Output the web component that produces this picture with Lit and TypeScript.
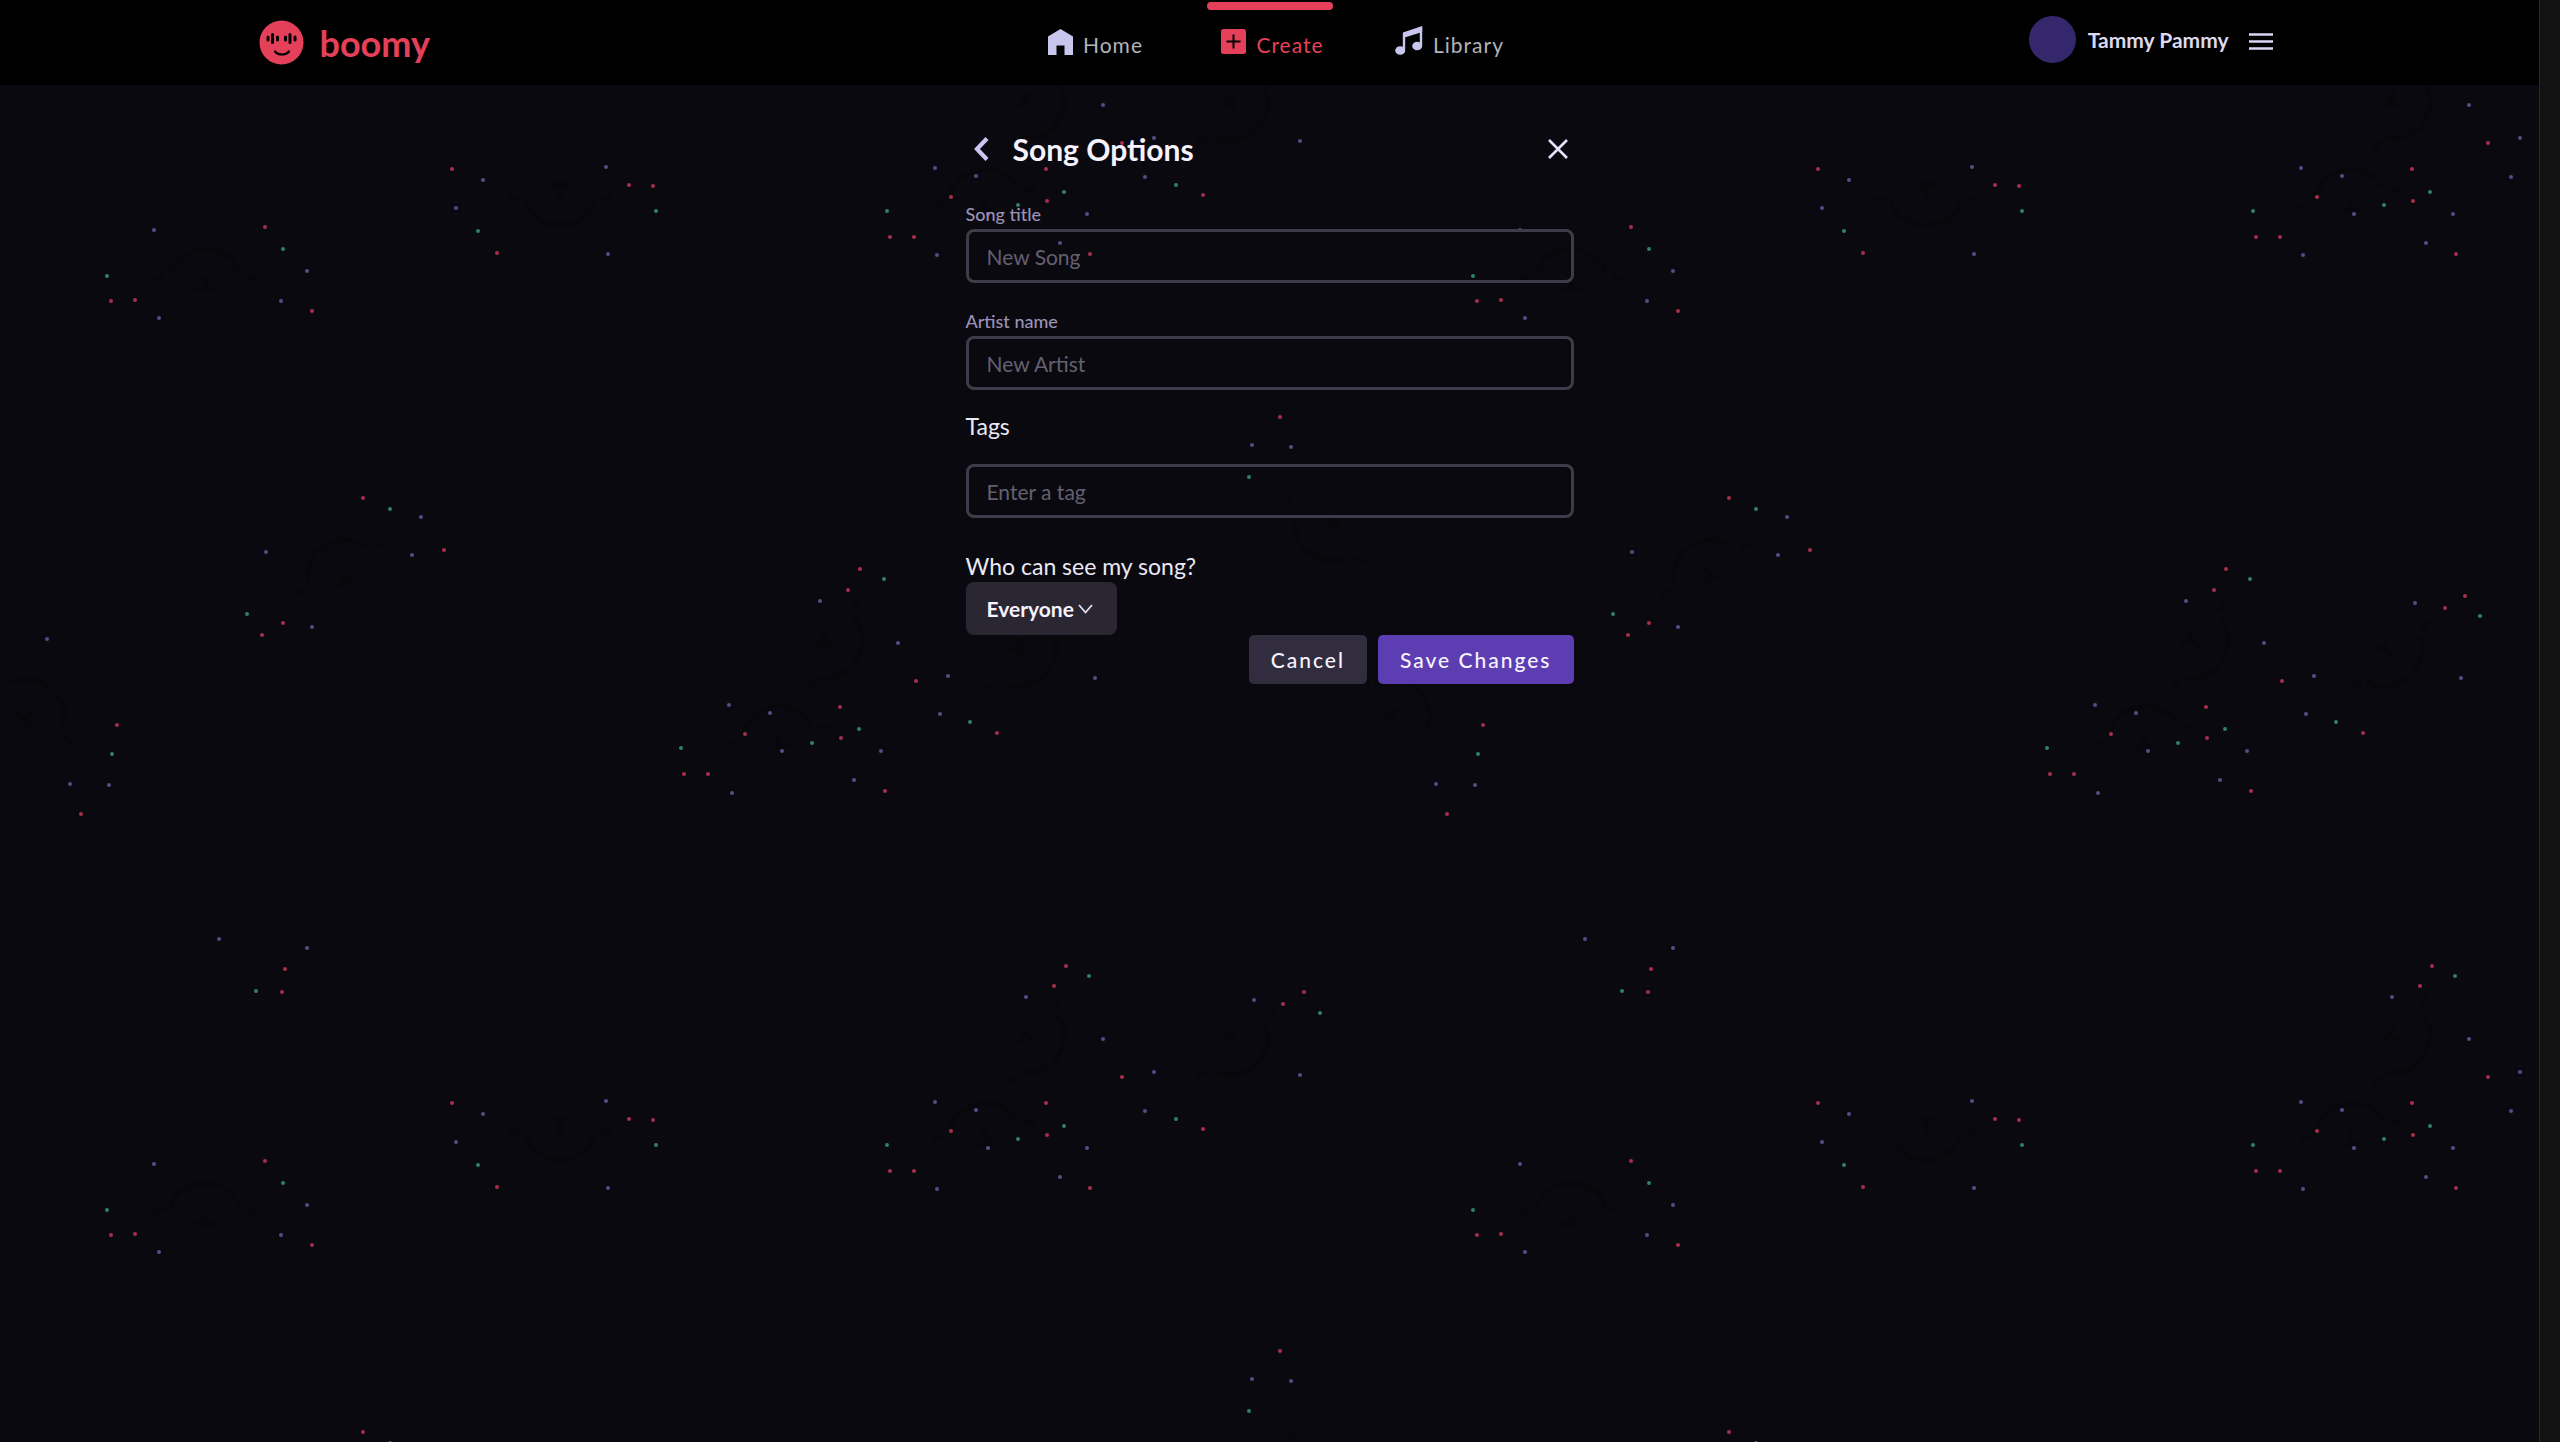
import { LitElement, html, svg, css } from "lit";
import { customElement, state } from "lit/decorators.js";

const TILE_W = 1366;
const TILE_H = 934;

/** Confetti of the background tile, grouped by colour as x,y pairs. */
const CONFETTI: Record<string, number[][]> = {
  rose: [
    [452, 169], [629, 185], [653, 186], [497, 253], [265, 227], [111, 301], [135, 300], [312, 311],
    [363, 498], [444, 550], [283, 623], [262, 635], [117, 725], [81, 814], [285, 969], [282, 992],
    [684, 774], [860, 569], [848, 590], [916, 681], [840, 707], [997, 733], [745, 734], [841, 738],
    [708, 774], [885, 791], [1066, 966], [1054, 986], [1304, 992], [1283, 1004], [1122, 1077],
    [1046, 1103], [1203, 1129], [951, 1131], [1047, 1135], [890, 1171], [914, 1171], [1090, 1188],
    [1280, 417], [1079, 608], [1099, 596],
  ],
  violet: [
    [483, 180], [606, 167], [456, 208], [608, 254], [154, 230], [307, 271], [159, 318], [281, 301],
    [421, 517], [266, 552], [412, 555], [312, 627], [47, 639], [70, 784], [109, 785], [219, 939],
    [307, 948], [820, 601], [898, 643], [948, 676], [1095, 678], [729, 705], [770, 713], [940, 714],
    [782, 751], [881, 751], [854, 780], [732, 793], [1026, 997], [1254, 1000], [1103, 1039],
    [1154, 1072], [1300, 1075], [935, 1102], [976, 1110], [1145, 1111], [988, 1148], [1087, 1148],
    [1060, 1177], [937, 1189], [1252, 445], [1291, 447], [1049, 603],
  ],
  teal: [
    [656, 211], [478, 231], [283, 249], [107, 276], [390, 509], [247, 614], [112, 754], [256, 991],
    [681, 748], [884, 579], [970, 722], [859, 729], [812, 743], [1089, 976], [1320, 1013],
    [1176, 1119], [1064, 1126], [1018, 1139], [887, 1145], [1249, 477], [1114, 616],
  ],
};

/** Ghost faces of the tile: x, y, rotation in degrees. */
const FACES = [
  [205, 278, 180], [560, 197, 0], [340, 570, 150], [32, 710, 220], [832, 645, -60],
  [778, 735, 170], [1034, 106, -60], [1236, 110, -40], [1326, 530, 40], [1024, 655, -40],
  [984, 198, 170],
];

@customElement("confetti-backdrop")
export class ConfettiBackdrop extends LitElement {
  static styles = css`
    :host {
      display: block;
      pointer-events: none;
    }
    .canvas {
      display: block;
      width: 100%;
      height: 100%;
    }
    .rose {
      fill: #a62f4b;
    }
    .violet {
      fill: #564d87;
    }
    .teal {
      fill: #2f8070;
    }
    .face {
      fill: none;
      stroke: #07070c;
      stroke-width: 6;
      stroke-linecap: round;
    }
  `;

  render() {
    return html`
      <svg class="canvas" aria-hidden="true">
        <defs>
          <pattern id="tile" width=${TILE_W} height=${TILE_H} patternUnits="userSpaceOnUse">
            ${FACES.map(
              ([x, y, turn]) => svg`
                <g class="face" transform="translate(${x} ${y}) rotate(${turn})">
                  <path d="M-34 6C-24 36 24 36 34 6M-50 0L-42 2M50 0L42 2M-8 -12L8 -12M0 -12L0 0" />
                </g>`,
            )}
            ${Object.entries(CONFETTI).map(([tone, dots]) =>
              dots.map(([x, y]) => svg`<circle class=${tone} cx=${x} cy=${y % TILE_H} r="2" />`),
            )}
          </pattern>
        </defs>
        <rect width="100%" height="100%" fill="url(#tile)" />
      </svg>
    `;
  }
}

@customElement("site-header")
export class SiteHeader extends LitElement {
  static styles = css`
    :host {
      display: block;
      background: #000;
    }
    .bar {
      box-sizing: border-box;
      display: grid;
      grid-template-columns: 1fr auto 1fr;
      max-width: 2022px;
      height: 85px;
      margin: 0 auto;
    }
    a {
      color: inherit;
      text-decoration: none;
    }
    .brand {
      display: flex;
      align-items: center;
      justify-self: start;
      gap: 16px;
      color: #e4405a;
      font-size: 36px;
      font-weight: 700;
      line-height: 44px;
    }
    .nav {
      display: flex;
      gap: 51px;
    }
    .item {
      box-sizing: border-box;
      display: flex;
      flex-direction: column;
      width: 126px;
      padding-top: 2px;
      color: #b4b3b8;
      font-size: 21px;
      line-height: 24px;
      letter-spacing: 1px;
    }
    .marker {
      height: 8px;
      border-radius: 4px;
    }
    .active {
      color: #e4405a;
    }
    .active .marker {
      background: #e4405a;
    }
    .entry {
      display: flex;
      align-items: flex-end;
      justify-content: center;
      gap: 10px;
      height: 47px;
      padding-left: 6px;
    }
    .entry svg {
      flex: none;
      margin-bottom: 2px;
    }
    .account {
      display: flex;
      align-items: center;
      justify-self: end;
      gap: 12px;
      height: 78px;
      padding-right: 4px;
      color: #dcd8ef;
      font-size: 21px;
      font-weight: 700;
    }
    .avatar {
      width: 47px;
      height: 47px;
      border-radius: 50%;
      background: #34276b;
    }
    .menu {
      display: flex;
      padding: 8px 4px 2px;
      margin-left: 4px;
      border: 0;
      background: none;
    }
  `;

  render() {
    return html`
      <header class="bar">
        <a class="brand" href="#">
          <svg width="45" height="45" viewBox="0 0 45 45" aria-hidden="true">
            <circle cx="22.500" cy="22.500" r="22" fill="#e4405a" />
            <g stroke="#000" stroke-width="3" stroke-linecap="round" fill="none">
              <path d="M9 17v3M13.500 14.500v8M18.500 17v3M26.500 17v3M31 14.500v8M36 17v3" />
              <path d="M16 31.500C19 35.500 27 35.500 30 31.500" stroke-width="2.200" />
            </g>
          </svg>
          boomy
        </a>
        <nav class="nav" aria-label="Main">
          <a class="item" href="#home">
            <span class="marker"></span>
            <span class="entry">
              <svg width="25" height="26" viewBox="0 0 25 26" fill="#c9c6ee" aria-hidden="true">
                <path d="M0 7.500L12.500 0L25 7.500V26H16.500V16.500H8.500V26H0Z" />
              </svg>
              Home
            </span>
          </a>
          <a class="item active" href="#create" aria-current="page">
            <span class="marker"></span>
            <span class="entry">
              <svg width="25" height="26" viewBox="0 0 25 26" aria-hidden="true">
                <rect y="0" width="25" height="25" rx="2.500" fill="#e4405a" />
                <path d="M12.500 5.500v14M5.500 12.500h14" stroke="#000" stroke-width="2" />
              </svg>
              Create
            </span>
          </a>
          <a class="item" href="#library">
            <span class="marker"></span>
            <span class="entry">
              <svg width="28" height="29" viewBox="0 0 28 29" aria-hidden="true">
                <path d="M9 23.500V8L26 2.500V20" fill="none" stroke="#c9c6ee" stroke-width="2.400" />
                <path d="M8 6.500L27.200 0V6L8 12Z" fill="#c9c6ee" />
                <ellipse cx="5.200" cy="24.500" rx="5" ry="4.300" fill="#c9c6ee" />
                <ellipse cx="22.200" cy="20" rx="5" ry="4.300" fill="#c9c6ee" />
              </svg>
              Library
            </span>
          </a>
        </nav>
        <div class="account">
          <span class="avatar"></span>
          <span>Tammy Pammy</span>
          <button class="menu" type="button" aria-label="Menu">
            <svg width="24" height="18" viewBox="0 0 24 18" aria-hidden="true">
              <path d="M0 1.500h24M0 8.500h24M0 15.500h24" stroke="#dcd3f5" stroke-width="2.600" />
            </svg>
          </button>
        </div>
      </header>
    `;
  }
}

@customElement("song-options")
export class SongOptions extends LitElement {
  @state() private audience = "Everyone";

  static styles = css`
    :host {
      display: block;
    }
    .form {
      display: flex;
      flex-direction: column;
      max-width: 608px;
      margin: 0 auto;
      padding-top: 44px;
      color: #ece9f6;
    }
    button,
    input,
    select {
      font-family: inherit;
    }
    .heading {
      display: flex;
      align-items: center;
      height: 40px;
      margin-bottom: 34px;
    }
    .title {
      flex: 1;
      margin: 0;
      color: #f6f3ff;
      font-size: 30px;
      font-weight: 700;
      line-height: 40px;
    }
    .icon {
      display: flex;
      padding: 6px;
      border: 0;
      background: none;
    }
    .back {
      margin: 0 18px 0 2px;
    }
    .field {
      display: flex;
      flex-direction: column;
      align-items: stretch;
    }
    .label {
      margin-bottom: 4px;
      color: #9a93b8;
      font-size: 18px;
      font-weight: 500;
      line-height: 22px;
    }
    .question {
      font-size: 23px;
      line-height: 28px;
    }
    .input {
      box-sizing: border-box;
      width: 100%;
      height: 54px;
      padding: 0 18px;
      border: 3px solid #3f3b4a;
      border-radius: 8px;
      background: transparent;
      color: #ece9f6;
      font-size: 21px;
    }
    .input::placeholder {
      color: #646070;
      opacity: 1;
    }
    .artist {
      margin-top: 27px;
    }
    .tags {
      gap: 24px;
      margin-top: 22px;
    }
    .privacy {
      align-items: flex-start;
      gap: 2px;
      margin-top: 34px;
    }
    .picker {
      display: grid;
      align-items: center;
    }
    .select {
      grid-area: 1 / 1;
      height: 53px;
      padding: 0 42px 0 21px;
      border: 0;
      border-radius: 8px;
      appearance: none;
      background: #2a2732;
      color: #f6f3ff;
      font-size: 21px;
      font-weight: 700;
    }
    .chevron {
      grid-area: 1 / 1;
      justify-self: end;
      margin-right: 24px;
      pointer-events: none;
    }
    .actions {
      display: flex;
      justify-content: flex-end;
      gap: 11px;
    }
    .button {
      height: 49px;
      padding: 0 22px;
      border: 0;
      border-radius: 5px;
      background: #312d3f;
      color: #f6f3ff;
      font-size: 21px;
      font-weight: 500;
      letter-spacing: 2px;
    }
    .primary {
      background: #5d3db2;
    }
  `;

  private pick(event: Event) {
    this.audience = (event.target as HTMLSelectElement).value;
  }

  render() {
    return html`
      <form class="form" @submit=${(event: Event) => event.preventDefault()}>
        <div class="heading">
          <button class="icon back" type="button" aria-label="Back">
            <svg width="15" height="24" viewBox="0 0 15 24" aria-hidden="true">
              <path d="M13 1.500L3 12L13 22.500" fill="none" stroke="#cdc5f2" stroke-width="4.200" />
            </svg>
          </button>
          <h1 class="title">Song Options</h1>
          <button class="icon" type="button" aria-label="Close">
            <svg width="20" height="20" viewBox="0 0 20 20" aria-hidden="true">
              <path d="M1 1L19 19M19 1L1 19" stroke="#e6e0fa" stroke-width="2.600" />
            </svg>
          </button>
        </div>
        <div class="field">
          <label class="label" for="song">Song title</label>
          <input class="input" id="song" type="text" placeholder="New Song" />
        </div>
        <div class="field artist">
          <label class="label" for="artist">Artist name</label>
          <input class="input" id="artist" type="text" placeholder="New Artist" />
        </div>
        <div class="field tags">
          <label class="question" for="tags">Tags</label>
          <input class="input" id="tags" type="text" placeholder="Enter a tag" />
        </div>
        <div class="field privacy">
          <label class="question" for="audience">Who can see my song?</label>
          <div class="picker">
            <select class="select" id="audience" .value=${this.audience} @change=${this.pick}>
              <option>Everyone</option>
            </select>
            <svg class="chevron" width="15" height="10" viewBox="0 0 15 10" aria-hidden="true">
              <path d="M1 1L7.500 8.500L14 1" fill="none" stroke="#e6e0fa" stroke-width="1.800" />
            </svg>
          </div>
        </div>
        <div class="actions">
          <button class="button" type="button">Cancel</button>
          <button class="button primary" type="submit">Save Changes</button>
        </div>
      </form>
    `;
  }
}

@customElement("app-root")
export class AppRoot extends LitElement {
  static styles = css`
    :host {
      display: flex;
      min-height: 100vh;
      background: #0a0910;
      font-family: Lato, "Liberation Sans", sans-serif;
    }
    .page {
      position: relative;
      isolation: isolate;
      flex: 1;
      min-width: 0;
    }
    .backdrop {
      position: absolute;
      inset: 0;
      z-index: -1;
    }
    .gutter {
      box-sizing: border-box;
      width: 21px;
      border-left: 1px solid #2b2b2b;
      background: #121212;
    }
  `;

  render() {
    return html`
      <div class="page">
        <confetti-backdrop class="backdrop"></confetti-backdrop>
        <site-header></site-header>
        <main><song-options></song-options></main>
      </div>
      <div class="gutter"></div>
    `;
  }
}
